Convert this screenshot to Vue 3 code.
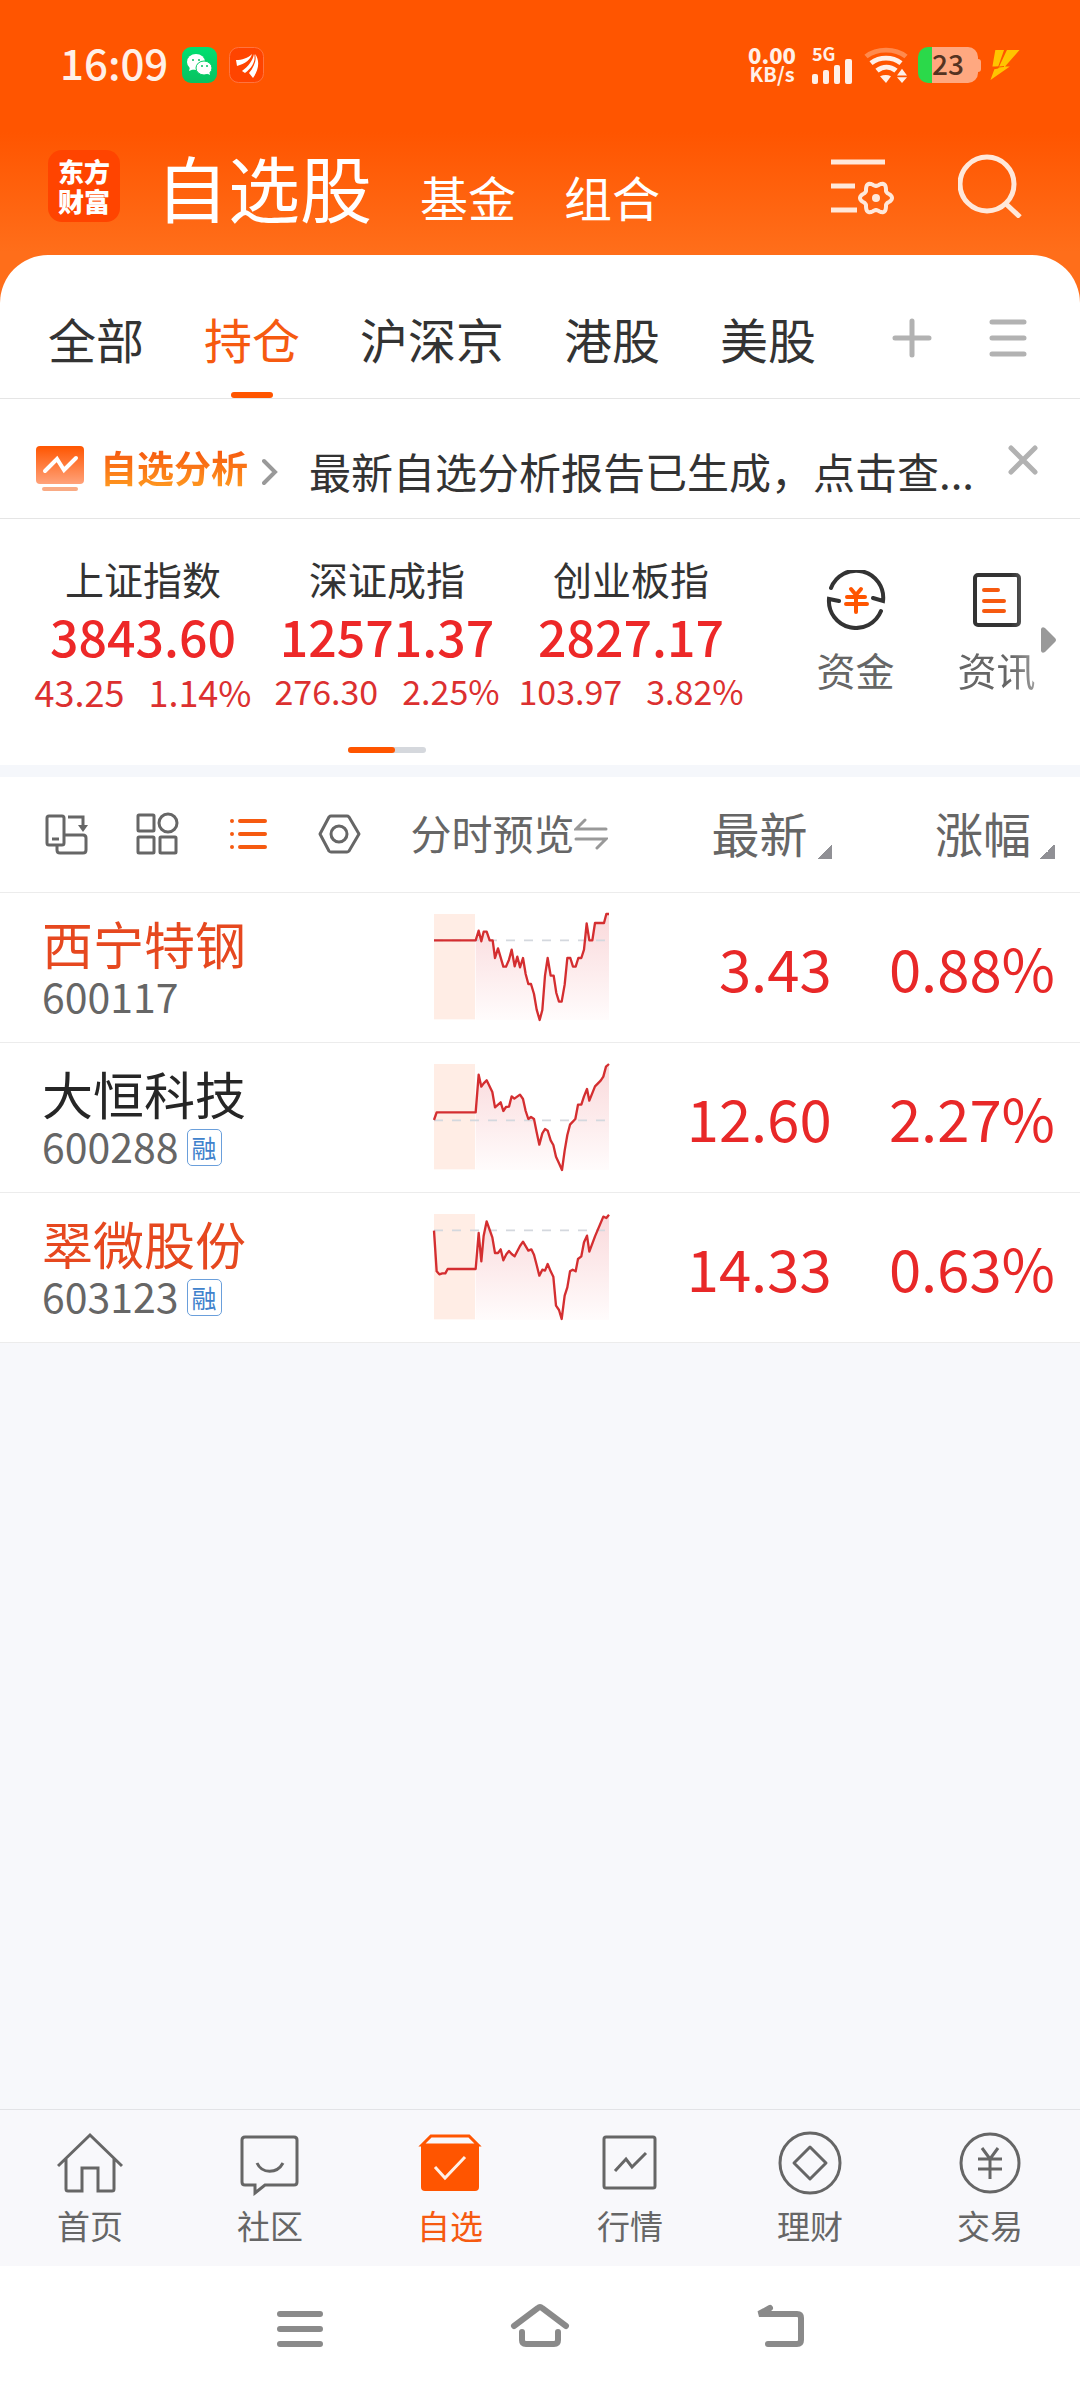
<script setup>
import { ref } from 'vue'

const sections = ['基金', '组合']
const tabs = ['全部', '持仓', '沪深京', '港股', '美股']
const activeTab = ref('持仓')

const indices = [
  { name: '上证指数', value: '3843.60', diff: '43.25', pct: '1.14%', wide: true },
  { name: '深证成指', value: '12571.37', diff: '276.30', pct: '2.25%' },
  { name: '创业板指', value: '2827.17', diff: '103.97', pct: '3.82%' }
]

// Intraday curves, drawn on a 525 x 318 canvas; `base` is yesterday's close.
const stocks = [
  {
    name: '西宁特钢', code: '600117', price: '3.43', pct: '0.88%', hot: true, margin: false, base: 79,
    line: '0,79 125,79 134,50 142,82 149,53 158,53 167,79 176,79 183,132 192,103 208,158 216,158 225,137 233,107 242,157 250,128 258,160 267,132 275,180 283,210 291,210 300,240 308,287 317,318 325,288 333,185 341,132 350,185 359,185 367,237 375,263 383,263 392,212 400,132 409,132 417,158 425,158 433,132 442,132 450,107 458,28 466,79 475,79 483,27 510,27 517,0 525,0'
  },
  {
    name: '大恒科技', code: '600288', price: '12.60', pct: '2.27%', hot: false, margin: true, base: 169,
    line: '0,168 8,145 125,145 134,32 142,68 149,58 158,49 175,84 183,130 200,115 208,141 216,129 225,128 233,97 241,104 258,92 267,105 275,141 283,165 291,159 300,165 308,205 316,242 325,208 333,195 341,200 350,229 358,243 366,278 375,298 384,318 392,260 400,213 408,182 424,165 432,122 442,122 450,97 459,75 466,110 483,67 500,50 508,38 516,8 525,0'
  },
  {
    name: '翠微股份', code: '603123', price: '14.33', pct: '0.63%', hot: true, margin: true, base: 49,
    line: '0,50 8,172 16,181 25,178 34,178 41,165 125,165 134,57 142,142 149,65 158,22 175,70 183,117 192,117 200,106 208,139 217,121 225,111 233,120 242,127 258,96 267,83 283,110 292,106 300,122 308,153 316,185 325,167 333,170 341,150 350,172 358,188 366,275 375,288 383,315 392,245 400,220 408,172 416,167 425,172 432,135 442,127 450,85 459,65 466,113 483,67 508,8 517,12 525,2'
  }
]

function area(line) {
  const pts = line.split(' ').filter(p => Number(p.split(',')[0]) >= 125)
  return '125,318 ' + pts.join(' ') + ' 525,318'
}

// Six-lobed cog outline.
function cog(cx, cy, r, wave) {
  const pts = []
  for (let i = 0; i < 72; i++) {
    const a = (i / 72) * Math.PI * 2
    const d = r + wave * Math.cos(6 * a)
    pts.push((cx + d * Math.cos(a)).toFixed(1) + ',' + (cy + d * Math.sin(a)).toFixed(1))
  }
  return pts.join(' ')
}
const cogPoints = cog(46, 43, 14, 2)
</script>

<template>
  <div class="app">
    <header class="top">
      <div class="status">
        <span class="clock">16:09</span>
        <svg class="app-badge" width="35" height="36" viewBox="0 0 35 36" aria-hidden="true">
          <defs>
            <linearGradient id="wx" x1="0" y1="0" x2="0" y2="1">
              <stop offset="0" stop-color="#00e070" /><stop offset="1" stop-color="#08c160" />
            </linearGradient>
          </defs>
          <rect width="35" height="36" rx="9" fill="url(#wx)" />
          <ellipse cx="14" cy="15" rx="9" ry="8" fill="#fff" />
          <path d="M8 20l-1 4 5-2z" fill="#fff" />
          <ellipse cx="22" cy="21" rx="8" ry="7" fill="#fff" stroke="#05cc64" stroke-width="1" />
          <path d="M24 26l4 2-1-4z" fill="#fff" />
          <circle cx="11" cy="13" r="1" fill="#07c160" /><circle cx="17" cy="13" r="1" fill="#07c160" />
          <circle cx="20" cy="19" r="1" fill="#07c160" /><circle cx="25" cy="19" r="1" fill="#07c160" />
        </svg>
        <svg class="app-badge" width="35" height="36" viewBox="0 0 35 36" aria-hidden="true">
          <rect x="0.5" y="0.5" width="34" height="35" rx="9" fill="#ff4400" stroke="#ff7440" />
          <path d="M7 13C13 13 19 11 23 7C22 12 16 17 8 19ZM13 24C19 20 24 13 25 7C27 13 24 20 16 26ZM20 26C25 20 28 13 26 7C31 13 30 23 24 31Z" fill="#fff" />
        </svg>
        <div class="status-right">
          <div class="speed"><b>0.00</b><span>KB/s</span></div>
          <div class="signal">
            <span>5G</span>
            <svg width="40" height="25" viewBox="0 0 40 25" fill="#fff0e8" aria-hidden="true">
              <rect x="0" y="15" width="6" height="10" rx="2" /><rect x="11" y="11" width="6" height="14" rx="2" />
              <rect x="22" y="6" width="6" height="19" rx="2" /><rect x="33" y="0" width="7" height="25" rx="2" />
            </svg>
          </div>
          <svg width="44" height="36" viewBox="0 0 44 38" preserveAspectRatio="none" fill="none" stroke-width="5" aria-hidden="true">
            <path d="M2 10C13 1 31 1 42 10" stroke="#ff8a4d" />
            <path d="M7 17C16 10 28 10 37 17" stroke="#fff0e8" />
            <path d="M13 25C19 20 26 20 32 25" stroke="#fff0e8" />
            <path d="M16 31Q22 28 27 31L22 38Z" fill="#fff0e8" />
            <path d="M38 23l5 7H33zM38 38l5-6H33z" fill="#fff0e8" />
          </svg>
          <span class="battery">23</span>
          <svg class="bolt" width="30" height="30" viewBox="0 0 30 31" fill="#ffc400" aria-hidden="true">
            <path d="M5 0H14L8 17H2ZM17 0H30L15 17H20L0 31L4 20L8 19Z" />
            <path d="M5 18L14 17" stroke="#ff5500" stroke-width="1" />
          </svg>
        </div>
      </div>

      <div class="title-row">
        <a href="#" class="logo"><span>东方</span><span>财富</span></a>
        <nav class="sections">
          <h1>自选股</h1>
          <a v-for="s in sections" :key="s" href="#">{{ s }}</a>
        </nav>
        <button class="head-btn" aria-label="管理自选">
          <svg width="64" height="62" viewBox="0 0 64 62" fill="none" stroke="#ffe8da" stroke-width="5">
            <path d="M1 7H55M1 31H25M1 55H27" />
            <polygon :points="cogPoints" stroke-width="4" stroke-linejoin="round" />
            <circle cx="46" cy="43" r="4" fill="#ffe8da" stroke="none" />
          </svg>
        </button>
        <button class="head-btn" aria-label="搜索">
          <svg width="64" height="64" viewBox="0 0 64 64" fill="none" stroke="#ffe8da" stroke-width="5">
            <circle cx="29" cy="30" r="27" /><path d="M47 49L62 63" />
          </svg>
        </button>
      </div>
    </header>

    <main class="sheet">
      <div class="tabs">
        <button
          v-for="t in tabs" :key="t" class="tab" :class="{ active: t === activeTab }"
          @click="activeTab = t"
        >{{ t }}</button>
        <div class="tab-tools">
          <button aria-label="添加分组">
            <svg width="40" height="40" viewBox="0 0 40 40" stroke="#b2b2b2" stroke-width="5" stroke-linecap="round">
              <path d="M20 3V37M3 20H37" />
            </svg>
          </button>
          <button aria-label="分组列表">
            <svg width="40" height="40" viewBox="0 0 40 40" stroke="#b2b2b2" stroke-width="5" stroke-linecap="round">
              <path d="M4 4H36M4 20H36M4 36H36" />
            </svg>
          </button>
        </div>
      </div>

      <div class="notice">
        <svg width="48" height="46" viewBox="0 0 48 46" fill="none" aria-hidden="true">
          <defs>
            <linearGradient id="ng" x1="0" y1="0" x2="0" y2="1">
              <stop offset="0" stop-color="#ff5500" /><stop offset="1" stop-color="#ffa27a" />
            </linearGradient>
          </defs>
          <rect width="48" height="38" rx="4" fill="url(#ng)" />
          <rect x="6" y="41" width="36" height="4" rx="2" fill="#f9ab85" />
          <path d="M9 25L21 13L28 24L40 12" stroke="#fff" stroke-width="4" stroke-linecap="round" />
        </svg>
        <a href="#" class="notice-title">自选分析</a>
        <svg class="chev" width="16" height="28" viewBox="0 0 16 28" fill="none" stroke="#999" stroke-width="4" stroke-linecap="round" aria-hidden="true">
          <path d="M2 3L13 14L2 25" />
        </svg>
        <p>最新自选分析报告已生成，点击查...</p>
        <button class="close" aria-label="关闭">
          <svg width="30" height="30" viewBox="0 0 30 30" stroke="#b2b2b2" stroke-width="5" stroke-linecap="round">
            <path d="M3 3L27 27M27 3L3 27" />
          </svg>
        </button>
      </div>

      <section class="market">
        <div class="indices">
          <div class="index-row">
            <div v-for="i in indices" :key="i.name" class="index">
              <span class="index-name">{{ i.name }}</span>
              <strong>{{ i.value }}</strong>
              <span class="change" :class="{ wide: i.wide }"><span>{{ i.diff }}</span><span>{{ i.pct }}</span></span>
            </div>
          </div>
          <div class="pager"><i></i></div>
        </div>
        <div class="shortcuts">
          <a href="#">
            <svg width="60" height="60" viewBox="0 0 60 60" fill="none" stroke="#333" stroke-width="4" stroke-linecap="round" aria-hidden="true">
              <path d="M5 18A27 27 0 0 1 57 31L47 28" /><path d="M55 41A27 27 0 0 1 3 29L13 31" />
              <path d="M25 19L30 25L35 19M21 27H39M20 34H41M30 25V42" stroke="#ff5500" />
            </svg>
            资金
          </a>
          <a href="#">
            <svg width="60" height="60" viewBox="0 0 60 60" fill="none" stroke="#333" stroke-width="4" stroke-linecap="round" aria-hidden="true">
              <rect x="8" y="5" width="44" height="50" rx="3" />
              <path d="M17 20H31M17 31H37M17 41H37" stroke="#f65a10" />
            </svg>
            资讯
          </a>
          <svg class="more" width="16" height="26" viewBox="0 0 16 26" aria-hidden="true">
            <path d="M0 2Q1-1 4 1L14 11Q16 13 14 15L4 25Q1 27 0 24Z" fill="#999" />
          </svg>
        </div>
      </section>

      <table class="stocks">
        <colgroup><col class="c-name" /><col class="c-chart" /><col class="c-price" /><col /></colgroup>
        <thead>
          <tr>
            <th>
              <div class="views">
                <button aria-label="横屏">
                  <svg width="44" height="44" viewBox="0 0 44 44" fill="none" stroke="#666" stroke-width="3">
                    <rect x="3" y="4" width="17" height="29" rx="2" /><path d="M8 27H15" />
                    <path d="M20 23H39Q42 23 42 26V38Q42 41 39 41H16Q13 41 13 38V33M24 5H39V14" />
                    <path d="M34 13H44L39 20Z" fill="#666" stroke="none" />
                  </svg>
                </button>
                <button aria-label="宫格">
                  <svg width="44" height="44" viewBox="0 0 44 44" fill="none" stroke="#666" stroke-width="3">
                    <rect x="3" y="3" width="16" height="16" rx="1" /><circle cx="33" cy="11" r="9" />
                    <rect x="3" y="25" width="16" height="16" rx="1" /><rect x="25" y="25" width="16" height="16" rx="1" />
                  </svg>
                </button>
                <button aria-label="列表">
                  <svg width="44" height="44" viewBox="0 0 44 44" fill="none" stroke="#f65a10" stroke-width="4" stroke-linecap="round">
                    <path d="M6 9H6M6 22H6M6 35H6M14 9H39M14 22H39M14 35H39" />
                  </svg>
                </button>
                <button aria-label="设置">
                  <svg width="44" height="44" viewBox="0 0 44 44" fill="none" stroke="#666" stroke-width="3" stroke-linejoin="round">
                    <path d="M3 22L12 5Q13 4 14 4H30Q31 4 32 5L42 22L32 39Q31 40 30 40H14Q13 40 12 39Z" />
                    <circle cx="22" cy="22" r="8" />
                  </svg>
                </button>
              </div>
            </th>
            <th>
              <button class="preview"><span>分时预览</span>
                <svg width="34" height="32" viewBox="0 0 34 32" fill="none" stroke="#999" stroke-width="3" stroke-linecap="round">
                  <path d="M11 2L2 11H32M2 21H32L23 30" />
                </svg>
              </button>
            </th>
            <th><button class="sort">最新<i></i></button></th>
            <th class="last"><button class="sort">涨幅<i></i></button></th>
          </tr>
        </thead>
        <tbody>
          <tr v-for="s in stocks" :key="s.code">
            <td class="id">
              <div class="name" :class="{ hot: s.hot }">{{ s.name }}</div>
              <div class="code">{{ s.code }}<span v-if="s.margin" class="tag">融</span></div>
            </td>
            <td class="chart">
              <svg width="175" height="106" viewBox="0 0 525 318" fill="none" overflow="visible" role="img" :aria-label="s.name + '分时图'">
                <defs>
                  <linearGradient id="fall" x1="0" y1="0" x2="0" y2="318" gradientUnits="userSpaceOnUse">
                    <stop offset="0" stop-color="#fad9db" /><stop offset="1" stop-color="#fffcfc" />
                  </linearGradient>
                </defs>
                <rect width="123" height="316" fill="#ffede5" />
                <polygon :points="area(s.line)" fill="url(#fall)" />
                <path :d="'M0 ' + s.base + 'H513'" stroke="#d4d8de" stroke-width="5" stroke-dasharray="27 27" />
                <polyline :points="s.line" stroke="#d42e30" stroke-width="7" stroke-linejoin="round" />
              </svg>
            </td>
            <td class="num">{{ s.price }}</td>
            <td class="num last">{{ s.pct }}</td>
          </tr>
        </tbody>
      </table>
    </main>

    <nav class="tabbar">
      <a href="#">
        <svg width="66" height="66" viewBox="0 0 66 66"><path d="M1 36L33 5L65 36M9 28V59Q9 61 11 61H25V38H41V61H55Q57 61 57 59V28" /></svg>
        首页
      </a>
      <a href="#">
        <svg width="66" height="66" viewBox="0 0 66 66"><path d="M8 7H57Q60 7 60 10V52Q60 55 57 55H28L18 63V55H8Q5 55 5 52V10Q5 7 8 7Z" /><path d="M20 33C25 44 40 44 46 33" /></svg>
        社区
      </a>
      <a href="#" class="current">
        <svg width="66" height="66" viewBox="0 0 66 66">
          <path d="M5 15L14 6H52L61 15Z" /><path d="M4 15H62V57Q62 61 58 61H8Q4 61 4 57Z" fill="#ff5500" stroke="none" />
          <path d="M18 37L28 48L48 27" stroke="#fff0e6" />
        </svg>
        自选
      </a>
      <a href="#">
        <svg width="66" height="66" viewBox="0 0 66 66"><rect x="7" y="7" width="51" height="51" rx="2" /><path d="M18 41L29 29L35 37L49 23" /></svg>
        行情
      </a>
      <a href="#">
        <svg width="66" height="66" viewBox="0 0 66 66"><circle cx="33" cy="33" r="30" /><path d="M33 17L49 33L33 49L17 33Z" stroke-linejoin="round" /></svg>
        理财
      </a>
      <a href="#">
        <svg width="66" height="66" viewBox="0 0 66 66"><circle cx="33" cy="33" r="29" /><path d="M25 18L33 29L41 18M21 29H45M21 39H45M33 29V49" /></svg>
        交易
      </a>
    </nav>

    <div class="sysnav">
      <button aria-label="最近任务"><svg width="64" height="64" viewBox="0 0 64 64"><path d="M12 17H52M12 32H52M12 47H52" /></svg></button>
      <button aria-label="主屏幕"><svg width="64" height="64" viewBox="0 0 64 64"><path d="M6 29L30 11Q32 9 34 11L58 29M14 35V43Q14 47 18 47H46Q50 47 50 43V35" /></svg></button>
      <button aria-label="返回"><svg width="64" height="64" viewBox="0 0 64 64"><path d="M22 11L11 17H49Q53 17 53 21V43Q53 47 49 47H20" /></svg></button>
    </div>
  </div>
</template>

<style>
body { margin: 0; background: #fff; }
</style>

<style scoped>
.app {
  display: flex;
  flex-direction: column;
  min-height: 100vh;
  background: #f7f8fb;
  color: #333;
  font-family: "Noto Sans CJK SC", sans-serif;
}
svg { display: block; flex: none; }
a { color: inherit; text-decoration: none; }
button {
  margin: 0;
  padding: 0;
  border: 0;
  background: none;
  color: inherit;
  font: inherit;
  cursor: pointer;
}

.top {
  padding-bottom: 48px;
  margin-bottom: -48px;
  background: linear-gradient(#ff5500 132px, #ff6e1a 252px);
  color: #fff;
}
.status {
  display: flex;
  align-items: center;
  height: 130px;
  padding: 0 60px;
  color: #fff0e8;
}
.clock { margin-right: 14px; padding-bottom: 6px; font-size: 42px; font-weight: 500; line-height: 48px; }
.app-badge { margin-right: 12px; }
.status-right { display: flex; align-items: center; gap: 10px; margin-left: auto; }
.speed { display: flex; flex-direction: column; align-items: center; padding-bottom: 2px; font-weight: 700; }
.speed b { font-size: 22px; line-height: 20px; }
.speed span { font-size: 20px; line-height: 20px; }
.signal { padding: 0 2px 0 6px; font-size: 18px; font-weight: 700; line-height: 12px; }
.battery {
  position: relative;
  width: 60px;
  height: 36px;
  border-radius: 10px;
  background: linear-gradient(90deg, #2bd94a 14px, #ffa880 14px);
  color: #553322;
  font-size: 28px;
  font-weight: 500;
  line-height: 32px;
  text-align: center;
}
.battery::after {
  content: "";
  position: absolute;
  right: -3px;
  top: 12px;
  width: 3px;
  height: 13px;
  border-radius: 0 3px 3px 0;
  background: #ffa880;
}
.bolt { margin-left: 2px; }

.title-row {
  display: flex;
  align-items: center;
  height: 111px;
  padding: 0 58px 14px 48px;
}
.logo {
  display: flex;
  flex-direction: column;
  align-items: center;
  justify-content: center;
  width: 72px;
  height: 72px;
  border-radius: 14px;
  background: #ff4400;
  font-size: 26px;
  font-weight: 900;
  line-height: 30px;
}
.sections { display: flex; align-items: baseline; gap: 48px; margin-left: 36px; font-size: 48px; }
.sections h1 { margin: 0; font-size: 72px; font-weight: 400; line-height: 96px; }
.head-btn { margin-left: 64px; }
.sections + .head-btn { margin-left: auto; }

.sheet { flex: 1; border-radius: 48px 48px 0 0; }
.tabs {
  display: flex;
  gap: 60px;
  height: 143px;
  padding: 0 52px 0 48px;
  border-bottom: 1px solid #e5e5e5;
  border-radius: 48px 48px 0 0;
  background: #fff;
}
.tab { position: relative; padding-top: 22px; font-size: 48px; white-space: nowrap; }
.tab.active { color: #f65a10; }
.tab.active::after {
  content: "";
  position: absolute;
  left: 50%;
  bottom: 0;
  width: 42px;
  height: 6px;
  margin-left: -21px;
  border-radius: 3px;
  background: #ff5500;
}
.tab-tools { display: flex; align-items: center; gap: 56px; margin-left: auto; padding-top: 22px; }

.notice {
  display: flex;
  align-items: center;
  height: 99px;
  padding: 20px 42px 0 36px;
  border-bottom: 1px solid #e5e5e5;
  background: #fff;
}
.notice-title {
  margin: 0 14px 4px 16px;
  background: linear-gradient(#f65a10 20%, #ff9a20 90%);
  background-clip: text;
  color: transparent;
  font-size: 37px;
  font-weight: 700;
}
.chev { margin-top: 6px; }
.notice p { margin: 4px 0 0 31px; font-size: 42px; line-height: 56px; white-space: nowrap; }
.close { margin-left: auto; padding-bottom: 18px; }

.market {
  display: flex;
  padding: 33px 0 12px 21px;
  border-bottom: 12px solid #f5f7fb;
  background: #fff;
}
.indices { flex: 1; }
.index-row { display: flex; }
.index { display: flex; flex: 1 1 0; flex-direction: column; align-items: center; white-space: nowrap; }
.index-name { font-size: 39px; line-height: 52px; }
.index strong { color: #ed2828; font-size: 50px; font-weight: 500; line-height: 62px; }
.change { display: flex; gap: 24px; color: #dc3030; font-size: 34px; line-height: 50px; }
.change.wide { font-size: 36px; }
.pager { width: 78px; height: 6px; margin: 31px auto 0; border-radius: 3px; background: #d5d8dd; }
.pager i { display: block; width: 60%; height: 6px; border-radius: 3px; background: #ff5500; }
.shortcuts { position: relative; display: flex; width: 295px; margin-left: 32px; padding-top: 18px; color: #666; }
.shortcuts a {
  display: flex;
  flex-direction: column;
  align-items: center;
  gap: 13px;
  width: 141px;
  font-size: 39px;
  line-height: 52px;
}
.shortcuts a:nth-child(2) { mask-image: linear-gradient(90deg, #000 60%, rgba(0, 0, 0, 0.5) 85%); }
.more { position: absolute; right: 23px; top: 75px; }

.stocks { width: 100%; border-collapse: collapse; table-layout: fixed; background: #fff; }
.c-name { width: 38%; }
.c-chart { width: 22%; }
.c-price { width: 17%; }
.stocks th, .stocks td { box-sizing: border-box; padding: 0; border-bottom: 1px solid #ececec; text-align: left; }
.stocks th { height: 115px; color: #666; font-weight: 400; }
.stocks td { height: 150px; }
.views { display: flex; gap: 47px; padding-left: 44px; }
.preview { display: flex; align-items: center; font-size: 41px; white-space: nowrap; }
.preview span { padding-bottom: 4px; }
.sort { display: flex; align-items: flex-end; gap: 9px; margin-left: auto; padding-bottom: 4px; font-size: 48px; line-height: 64px; }
.sort i { width: 15px; height: 15px; margin-bottom: 5px; background: linear-gradient(135deg, transparent 50%, #909095 50%); }
.stocks .last { padding-right: 25px; }
.stocks .id { padding-left: 42px; }
.name { color: #262626; font-size: 51px; line-height: 56px; }
.name.hot { color: #e6481f; }
.code { display: flex; align-items: center; gap: 8px; color: #666; font-size: 41px; line-height: 48px; }
.tag {
  box-sizing: border-box;
  width: 35px;
  height: 37px;
  margin-top: 4px;
  border: 1px solid #6a9fdb;
  border-radius: 5px;
  color: #3f82cc;
  font-size: 25px;
  line-height: 34px;
  text-align: center;
}
.stocks .chart { padding-left: 24px; }
.stocks .num { color: #e82828; font-size: 58px; text-align: right; white-space: nowrap; }

.tabbar {
  display: flex;
  padding: 20px 0 19px;
  border-top: 1px solid #e2e3e6;
  background: #f8f8fb;
  color: #666;
}
.tabbar a {
  display: flex;
  flex: 1;
  flex-direction: column;
  align-items: center;
  gap: 7px;
  font-size: 33px;
  line-height: 44px;
}
.tabbar svg { fill: none; stroke: #666; stroke-width: 3; }
.tabbar .current { color: #f65a10; }
.tabbar .current svg { stroke: #ff5500; }

.sysnav { display: flex; justify-content: center; gap: 176px; padding: 31px 0; background: #fff; }
.sysnav svg { fill: none; stroke: #8a8a8a; stroke-width: 6; stroke-linecap: round; }
</style>
